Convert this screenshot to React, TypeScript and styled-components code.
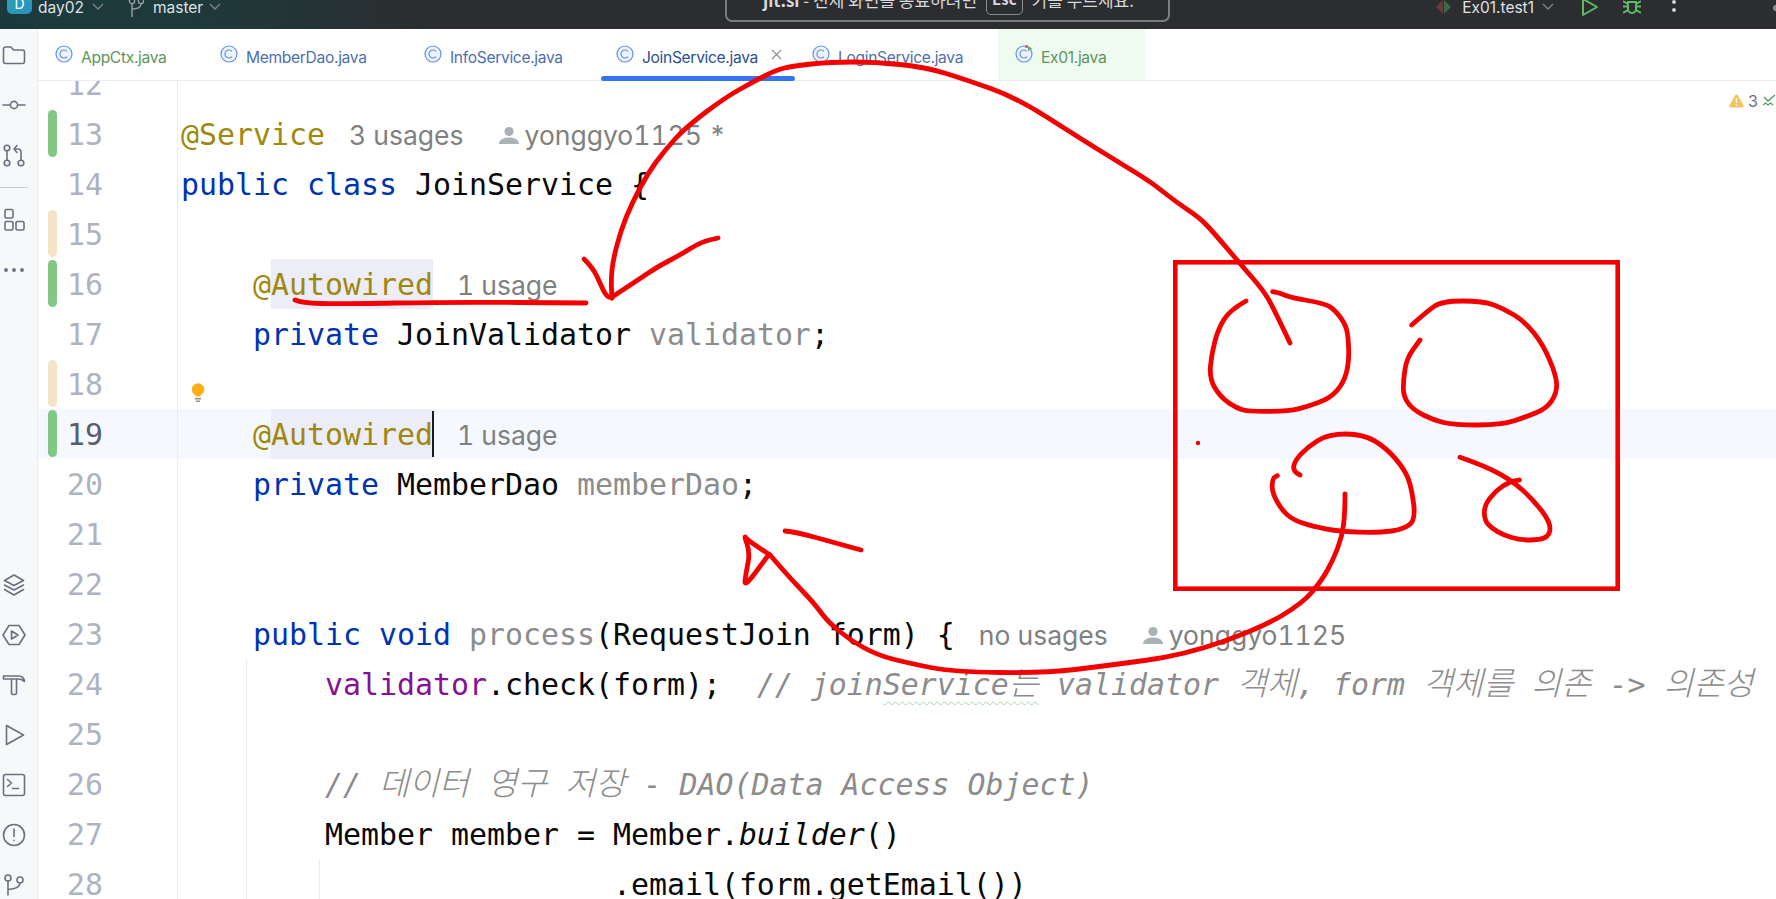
import React from "react";
import styled, { createGlobalStyle } from "styled-components";

const GlobalStyle = createGlobalStyle`
  html, body {
    margin: 0;
    padding: 0;
    background: #fff;
    overflow: hidden;
  }
`;

const tokenColors = {
  ann: "#9e880d",
  kw: "#0033b3",
  plain: "#080808",
  dim: "#8c8c8c",
  field: "#871094",
};

const Page = styled.div`
  position: relative;
  width: 1776px;
  height: 899px;
  overflow: hidden;
  font-family: Inter, "Noto Sans", sans-serif;
`;

/* top bar */
const TopBar = styled.header`
  position: relative;
  height: 29px;
  padding-bottom: 15px;
  box-sizing: border-box;
  display: flex;
  align-items: center;
  overflow: visible;
  color: #dfe1e5;
  background: linear-gradient(90deg, #1c3a3d 0, #1e3a3b 180px, #2b2d30 430px);
`;

const Logo = styled.div`
  flex: none;
  width: 25px;
  height: 25px;
  margin: -11px 6px 0 7px;
  border-radius: 5px;
  background: linear-gradient(135deg, #2aa7b0, #2b8fc0);
  color: #fff;
  font-size: 14px;
  line-height: 30px;
  text-align: center;
`;

const BarLabel = styled.span<{ $gap?: number }>`
  font-size: 15.5px;
  margin-left: ${({ $gap }) => $gap ?? 0}px;
`;

const BarIcon = styled.svg<{ $gap: number }>`
  flex: none;
  margin-left: ${({ $gap }) => $gap}px;
`;

const BarRight = styled.div`
  margin-left: auto;
  display: flex;
  align-items: center;
  padding-right: 0;
`;

const Notice = styled.div`
  position: absolute;
  left: 725px;
  top: -24px;
  width: 445px;
  height: 46px;
  box-sizing: border-box;
  padding-left: 36px;
  border: 2px solid #7b7d80;
  border-radius: 7px;
  background: #2b2d30;
  display: flex;
  align-items: center;
  color: #d7d9dc;
  font-family: "Noto Sans CJK KR", sans-serif;
  font-size: 17px;
  white-space: pre;
`;

const NoticeKey = styled.span`
  height: 32px;
  box-sizing: border-box;
  margin: 0 9px;
  padding: 0 5px;
  border: 1px solid #8b8d90;
  border-radius: 5px;
  font-weight: 700;
  font-size: 15px;
  line-height: 30px;
`;

/* body */
const Body = styled.div`
  display: flex;
  height: 870px;
`;

const Sidebar = styled.nav`
  flex: none;
  width: 38px;
  box-sizing: border-box;
  overflow: hidden;
  background: #f7f8fa;
  border-right: 1px solid #ebecf0;
  padding-top: 1px;
`;

const RailCell = styled.div`
  width: 27px;
  height: 50px;
  display: flex;
  align-items: center;
  justify-content: center;
`;

const RailRule = styled.div`
  width: 28px;
  height: 1px;
  background: #c9ccd6;
  margin: 7px 0 7px;
`;

const RailBottom = styled.div`
  margin-top: 265px;
`;

const RailSvg = styled.svg`
  width: 24px;
  height: 24px;
  fill: none;
  stroke: #6c707e;
  stroke-width: 1.6;
  stroke-linejoin: round;
  stroke-linecap: round;
`;

const Main = styled.main`
  flex: 1;
  min-width: 0;
  display: flex;
  flex-direction: column;
`;

const Tabs = styled.div`
  flex: none;
  height: 52px;
  box-sizing: border-box;
  display: flex;
  border-bottom: 1px solid #ebecf0;
`;

const Tab = styled.div<{ $bg?: string; $w: number; $active?: boolean }>`
  position: relative;
  flex: none;
  width: ${({ $w }) => $w}px;
  box-sizing: border-box;
  padding: 2px 0 0 17px;
  display: flex;
  align-items: center;
  gap: 8px;
  background: ${({ $bg }) => $bg ?? "transparent"};
`;

const TabName = styled.span<{ $color: string }>`
  font-size: 15.6px;
  letter-spacing: -0.33px;
  color: ${({ $color }) => $color};
  padding-top: 3px;
`;

const ActiveBar = styled.div`
  position: absolute;
  left: 2px;
  right: 0;
  bottom: -1px;
  height: 5px;
  border-radius: 3px;
  background: #3574f0;
`;

const TabClose = styled.svg`
  position: absolute;
  left: 172px;
  top: 20px;
`;

const Editor = styled.div`
  position: relative;
  flex: 1;
  overflow: hidden;
  font-family: "DejaVu Sans Mono", "Liberation Mono", monospace;
  font-size: 29.9px;
`;

const Lines = styled.div`
  margin-top: -22px;
`;

const Row = styled.div<{ $current?: boolean }>`
  display: flex;
  height: 50px;
  background: ${({ $current }) => ($current ? "#f5f8fe" : "transparent")};
`;

const Gutter = styled.div`
  flex: none;
  width: 140px;
  box-sizing: border-box;
  border-right: 1px solid #ebecf0;
  display: flex;
  padding-left: 10px;
`;

const Marker = styled.div<{ $color?: string }>`
  flex: none;
  width: 9px;
  height: 47px;
  margin: 1px 10px 0 0;
  border-radius: 5px;
  background: ${({ $color }) => $color ?? "transparent"};
`;

const LineNo = styled.span<{ $current?: boolean }>`
  line-height: 52px;
  color: ${({ $current }) => ($current ? "#5a5d6b" : "#aeb3c2")};
`;

const Code = styled.div`
  position: relative;
  flex: 1;
  min-width: 0;
  padding-left: 3px;
  line-height: 52px;
  white-space: pre;
  overflow: hidden;
  color: ${tokenColors.plain};
`;

const Tok = styled.span<{ $k: keyof typeof tokenColors; $italic?: boolean }>`
  color: ${({ $k }) => tokenColors[$k]};
  font-style: ${({ $italic }) => ($italic ? "italic" : "normal")};
`;

const Hangul = styled.span`
  font-family: "Noto Sans CJK KR", sans-serif;
  font-size: 32.7px;
  font-weight: 300;
  line-height: 1;
`;

const Selected = styled.span`
  display: inline-block;
  height: 50px;
  background: #edecf9;
`;

const Caret = styled.span`
  display: inline-block;
  width: 2px;
  height: 46px;
  margin: 2px -1px 0;
  vertical-align: top;
  background: #1a1a1a;
`;

const Typo = styled.span`
  text-decoration: underline wavy #a9d6ab 1px;
  text-underline-offset: 6px;
`;

const Inlay = styled.span<{ $gap?: number }>`
  font-family: Inter, "Noto Sans", sans-serif;
  font-size: 26.5px;
  font-feature-settings: "tnum";
  line-height: 1;
  color: #808080;
  margin-left: ${({ $gap }) => $gap ?? 24}px;
`;

const PersonIcon = styled.svg`
  display: inline-block;
  vertical-align: -1px;
  margin-left: 34px;
  margin-right: 5px;
`;

const Guide = styled.div<{ $x: number }>`
  position: absolute;
  top: 0;
  bottom: 0;
  left: ${({ $x }) => $x}px;
  width: 1px;
  background: #ebecf0;
`;

const Bulb = styled.svg`
  position: absolute;
  left: 13px;
  top: 24px;
`;

const Inspections = styled.div`
  position: absolute;
  top: 10px;
  right: -3px;
  display: flex;
  align-items: center;
  gap: 4px;
  font-family: Inter, sans-serif;
  font-size: 16px;
  color: #6c707e;
`;

const Ink = styled.svg`
  position: absolute;
  left: 0;
  top: 0;
  pointer-events: none;
  fill: none;
  stroke: #f50000;
  stroke-width: 4.8;
  stroke-linecap: round;
  stroke-linejoin: round;
`;

const InkBox = styled.rect`
  stroke-width: 4.6;
  stroke-linejoin: miter;
`;

const InkDot = styled.circle`
  fill: #f50000;
  stroke: none;
`;

type Pt = [number, number];

// pen strokes: runs of points, rounded through the midpoints
const smooth = (pts: Pt[]) => {
  let d = `M${pts[0][0]} ${pts[0][1]}`;
  for (let i = 1; i < pts.length - 1; i++) {
    const mx = (pts[i][0] + pts[i + 1][0]) / 2;
    const my = (pts[i][1] + pts[i + 1][1]) / 2;
    d += ` Q${pts[i][0]} ${pts[i][1]} ${mx} ${my}`;
  }
  const last = pts[pts.length - 1];
  return d + ` L${last[0]} ${last[1]}`;
};

// the four blobs were traced in a crop of 3x starting at 1150,250
const crop = (pts: Pt[]): Pt[] =>
  pts.map(([x, y]) => [1150 + x / 3, 250 + y / 3]);

const strokes: Pt[][] = [
  // arc from the first blob to the @Autowired arrow
  [
    [1290, 343], [1273, 307], [1263, 290], [1243, 267], [1214, 233], [1200, 218], [1176, 202],
    [1151, 182], [1128, 168], [1078, 137], [1017, 98], [967, 80], [925, 67], [875, 62], [830, 62],
    [793, 66], [776, 70], [753, 82], [726, 97], [686, 127], [665, 150], [648, 173], [632, 203],
    [621, 230], [613, 260], [611, 280], [612, 298],
  ],
  [[612, 297], [638, 280], [657, 267], [680, 255], [701, 242], [718, 238]],
  [[584, 259], [593, 268], [600, 283], [606, 296], [612, 298]],
  // underline below @Autowired
  [[295, 300], [302, 303], [340, 304], [450, 302], [586, 303]],
  // arc from the third blob to memberDao
  [
    [1345, 494], [1345, 513], [1342, 537], [1333, 560], [1322, 580], [1303, 603], [1261, 628],
    [1185, 655], [1104, 666], [1046, 673], [953, 672], [908, 663], [877, 655], [850, 640],
    [828, 622], [814, 603], [790, 578], [770, 555],
  ],
  [[770, 555], [747, 540], [744, 535], [750, 553], [746, 573], [744, 588], [767, 557]],
  [[785, 531], [796, 532], [832, 542], [861, 550]],
  // blobs
  crop([
    [288, 153], [240, 180], [205, 235], [185, 310], [178, 385], [210, 440], [260, 475], [300, 485],
    [420, 483], [470, 470], [540, 445], [580, 400], [597, 340], [595, 260], [585, 220], [550, 175],
    [520, 160], [425, 143], [385, 128], [368, 125],
  ]),
  crop([
    [785, 225], [830, 185], [875, 153], [1000, 153], [1060, 175], [1125, 215], [1180, 285],
    [1220, 380], [1220, 430], [1190, 475], [1130, 500], [1055, 525], [910, 525], [850, 510],
    [790, 480], [760, 440], [760, 390], [770, 325], [810, 270],
  ]),
  crop([
    [450, 675], [428, 665], [435, 630], [475, 590], [535, 552], [640, 552], [710, 595], [765, 660],
    [785, 715], [797, 810], [760, 838], [690, 848], [570, 845], [490, 830], [430, 810], [395, 780],
    [365, 725], [368, 685], [382, 677],
  ]),
  crop([
    [930, 622], [1010, 650], [1090, 695], [1150, 750], [1200, 815], [1200, 855], [1170, 870],
    [1110, 870], [1060, 855], [1025, 835], [1003, 810], [1003, 765], [1040, 720], [1080, 695],
    [1108, 690],
  ]),
];

const Chevron = ({ gap }: { gap: number }) => (
  <BarIcon $gap={gap} width="14" height="14" viewBox="0 0 14 14" fill="none" stroke="#7d8288" strokeWidth="1.4">
    <path d="M2 4l5 5 5-5" />
  </BarIcon>
);

const ClassIcon = ({ run }: { run?: boolean }) => (
  <svg width="18" height="18" viewBox="0 0 18 18" fill="none" style={{ flex: "none", marginTop: -4 }}>
    <circle cx="9" cy="9" r="8" fill="#eef3fe" stroke="#5f8fe8" strokeWidth="1.2" />
    <path d="M12 6.4a4 4 0 1 0 0 5.2" stroke="#5f8fe8" strokeWidth="1.2" />
    {run && <path d="M10 0h3v3h-3z" fill="#e0707a" />}
    {run && <path d="M13 1l4 2.5-4 2.5z" fill="#5fa868" />}
  </svg>
);

const PersonGlyph = () => (
  <PersonIcon width="22" height="20" viewBox="0 0 22 20" fill="#a9b2b5">
    <circle cx="11" cy="5.5" r="4.6" />
    <path d="M1 18c0-4 4-6.5 10-6.5S21 14 21 18z" />
  </PersonIcon>
);

const rows: { n: number; marker?: string; code?: React.ReactNode }[] = [
  { n: 12 },
  {
    n: 13,
    marker: "#82c785",
    code: (
      <>
        <Tok $k="ann">@Service</Tok>
        <Inlay>3 usages</Inlay>
        <PersonGlyph />
        <Inlay $gap={0}>yonggyo1125 *</Inlay>
      </>
    ),
  },
  {
    n: 14,
    code: (
      <>
        <Tok $k="kw">public class</Tok> JoinService {"{"}
      </>
    ),
  },
  { n: 15, marker: "#f5e3c8" },
  {
    n: 16,
    marker: "#82c785",
    code: (
      <>
        {"    "}
        <Tok $k="ann">
          @<Selected>Autowired</Selected>
        </Tok>
        <Inlay>1 usage</Inlay>
      </>
    ),
  },
  {
    n: 17,
    code: (
      <>
        {"    "}
        <Tok $k="kw">private</Tok> JoinValidator <Tok $k="dim">validator</Tok>;
      </>
    ),
  },
  { n: 18, marker: "#f5e3c8" },
  {
    n: 19,
    marker: "#82c785",
    code: (
      <>
        {"    "}
        <Tok $k="ann">
          @<Selected>Autowired</Selected>
        </Tok>
        <Caret />
        <Inlay>1 usage</Inlay>
      </>
    ),
  },
  {
    n: 20,
    code: (
      <>
        {"    "}
        <Tok $k="kw">private</Tok> MemberDao <Tok $k="dim">memberDao</Tok>;
      </>
    ),
  },
  { n: 21 },
  { n: 22 },
  {
    n: 23,
    code: (
      <>
        {"    "}
        <Tok $k="kw">public void</Tok> <Tok $k="dim">process</Tok>(RequestJoin form) {"{"}
        <Inlay>no usages</Inlay>
        <PersonGlyph />
        <Inlay $gap={0}>yonggyo1125</Inlay>
      </>
    ),
  },
  {
    n: 24,
    code: (
      <>
        {"        "}
        <Tok $k="field">validator</Tok>.check(form);{"  "}
        <Tok $k="dim" $italic>
          // join<Typo>Service<Hangul>는</Hangul></Typo> validator <Hangul>객체</Hangul>, form{" "}
          <Hangul>객체를</Hangul> <Hangul>의존</Hangul> -&gt; <Hangul>의존성</Hangul>
        </Tok>
      </>
    ),
  },
  { n: 25 },
  {
    n: 26,
    code: (
      <>
        {"        "}
        <Tok $k="dim" $italic>
          // <Hangul>데이터</Hangul> <Hangul>영구</Hangul> <Hangul>저장</Hangul> - DAO(Data Access Object)
        </Tok>
      </>
    ),
  },
  {
    n: 27,
    code: (
      <>
        {"        "}Member member = Member.<Tok $k="plain" $italic>builder</Tok>()
      </>
    ),
  },
  { n: 28, code: <>{"                        "}.email(form.getEmail())</> },
];

const App = () => (
  <Page>
    <GlobalStyle />
    <TopBar>
      <Logo>D</Logo>
      <BarLabel>day02</BarLabel>
      <Chevron gap={7} />
      <BarIcon $gap={23} width="16" height="22" viewBox="0 0 16 22" fill="none" stroke="#9a9ea3" strokeWidth="1.4">
        <circle cx="4" cy="5" r="2.6" />
        <circle cx="13" cy="5" r="2.6" />
        <path d="M4 8v13M13 8c0 4-4 5-9 5" />
      </BarIcon>
      <BarLabel $gap={9}>master</BarLabel>
      <Chevron gap={5} />
      <BarRight>
        <BarIcon $gap={0} width="17" height="16" viewBox="0 0 17 16">
          <path d="M8 1L1 8l7 7z" fill="#6d3a3c" />
          <path d="M9 1l7 7-7 7z" fill="#3d6a46" />
        </BarIcon>
        <BarLabel $gap={10}>Ex01.test1</BarLabel>
        <Chevron gap={7} />
        <BarIcon $gap={26} width="18" height="20" viewBox="0 0 18 20" fill="none" stroke="#5fb865" strokeWidth="2" strokeLinejoin="round">
          <path d="M2 2l14 8-14 8z" />
        </BarIcon>
        <BarIcon $gap={24} width="18" height="20" viewBox="0 0 18 20" fill="none" stroke="#5fb865" strokeWidth="2">
          <path d="M5 5h8v7a4 4 0 0 1-8 0zM0 4l5 3M18 4l-5 3M0 9.500h5M18 9.500h-5M0 16l5-3M18 16l-5-3" />
        </BarIcon>
        <BarIcon $gap={31} width="4" height="16" viewBox="0 0 4 16" fill="#d5d7da" stroke="none">
          <circle cx="2" cy="3" r="1.900" />
          <circle cx="2" cy="11" r="1.900" />
        </BarIcon>
        <BarIcon $gap={96} width="4" height="14" viewBox="0 0 4 14" fill="#8b8d90" stroke="none">
          <circle cx="4" cy="8" r="3" />
        </BarIcon>
      </BarRight>
      <Notice>
        <b>jit.si</b> - 전체 화면을 종료하려면<NoticeKey>Esc</NoticeKey>키를 누르세요.
      </Notice>
    </TopBar>
    <Body>
      <Sidebar>
        <RailCell>
          <RailSvg viewBox="0 0 24 24">
            <path d="M1.500 6a2 2 0 0 1 2-2h5.500l2.500 3h9a2 2 0 0 1 2 2v9.500a2 2 0 0 1-2 2h-17a2 2 0 0 1-2-2z" />
          </RailSvg>
        </RailCell>
        <RailCell>
          <RailSvg viewBox="0 0 24 24">
            <circle cx="12" cy="12" r="3.600" />
            <path d="M1 12h7.400M15.600 12H23" />
          </RailSvg>
        </RailCell>
        <RailCell>
          <RailSvg viewBox="0 0 24 24">
            <circle cx="5" cy="5" r="2.800" />
            <circle cx="5" cy="20" r="2.800" />
            <circle cx="19" cy="20" r="2.800" />
            <path d="M5 8v9M19 17V9a3 3 0 0 0-3-3h-3M15 2.500L12 6l3 3.500" />
          </RailSvg>
        </RailCell>
        <RailRule />
        <RailCell>
          <RailSvg viewBox="0 0 24 24">
            <rect x="3" y="1.500" width="8" height="8.500" rx="1.500" />
            <rect x="3" y="13.500" width="8" height="8.500" rx="1.500" />
            <rect x="14" y="13.500" width="8" height="8.500" rx="1.500" />
          </RailSvg>
        </RailCell>
        <RailCell>
          <RailSvg viewBox="0 0 24 24" style={{ fill: "#6c707e", stroke: "none" }}>
            <circle cx="4" cy="12" r="1.900" />
            <circle cx="12" cy="12" r="1.900" />
            <circle cx="20" cy="12" r="1.900" />
          </RailSvg>
        </RailCell>
        <RailBottom>
          <RailCell>
            <RailSvg viewBox="0 0 24 24">
              <path d="M12 2l9.500 5.500L12 12.500 2.500 7.500zM2.500 12L12 17l9.500-5M2.500 16.500L12 22l9.500-5.500" />
            </RailSvg>
          </RailCell>
          <RailCell>
            <RailSvg viewBox="0 0 24 24">
              <path d="M7 2.500h10L23 12l-6 9.500H7L1 12z" />
              <path d="M9.500 8l6.500 4-6.500 4z" />
            </RailSvg>
          </RailCell>
          <RailCell>
            <RailSvg viewBox="0 0 24 24">
              <path d="M1.500 3h15.500c3 0 5.500 2.500 5.500 5.500l-3 -2-3-.5h-15zM9.500 6v14a1.500 1.500 0 0 0 1.500 1.500h2a1.500 1.500 0 0 0 1.500-1.500V6" />
            </RailSvg>
          </RailCell>
          <RailCell>
            <RailSvg viewBox="0 0 24 24">
              <path d="M4.500 2.500L21.500 12 4.500 21.500z" />
            </RailSvg>
          </RailCell>
          <RailCell>
            <RailSvg viewBox="0 0 24 24">
              <rect x="1.500" y="1.500" width="21" height="21" rx="2" />
              <path d="M5.500 6.500l4 3.500-4 3.500M10.500 15.500h6" />
            </RailSvg>
          </RailCell>
          <RailCell>
            <RailSvg viewBox="0 0 24 24">
              <circle cx="12" cy="12" r="10.500" />
              <path d="M12 6v7.500M12 17.200v.3" />
            </RailSvg>
          </RailCell>
          <RailCell>
            <RailSvg viewBox="0 0 24 24">
              <circle cx="6" cy="5" r="3" />
              <circle cx="18" cy="7" r="3" />
              <path d="M6 8v14M18 10c0 4-4 6-12 6.500" />
            </RailSvg>
          </RailCell>
        </RailBottom>
      </Sidebar>
      <Main>
        <Tabs>
          <Tab $w={165}>
            <ClassIcon />
            <TabName $color="#5c9462">AppCtx.java</TabName>
          </Tab>
          <Tab $w={204}>
            <ClassIcon />
            <TabName $color="#4d6fae">MemberDao.java</TabName>
          </Tab>
          <Tab $w={192}>
            <ClassIcon />
            <TabName $color="#4d6fae">InfoService.java</TabName>
          </Tab>
          <Tab $w={196} $active>
            <ClassIcon />
            <TabName $color="#2d4f8f">JoinService.java</TabName>
            <TabClose width="11" height="11" viewBox="0 0 11 11" fill="none" stroke="#8a8d94" strokeWidth="1.100">
              <path d="M1 1l9 9M10 1l-9 9" />
            </TabClose>
            <ActiveBar />
          </Tab>
          <Tab $w={203}>
            <ClassIcon />
            <TabName $color="#4d6fae">LoginService.java</TabName>
          </Tab>
          <Tab $w={147} $bg="#eefbee">
            <ClassIcon run />
            <TabName $color="#5c9462">Ex01.java</TabName>
          </Tab>
        </Tabs>
        <Editor>
          <Lines>
            {rows.map(({ n, marker, code }) => (
              <Row key={n} $current={n === 19}>
                <Gutter>
                  <Marker $color={marker} />
                  <LineNo $current={n === 19}>{n}</LineNo>
                </Gutter>
                <Code>
                  {n >= 24 && <Guide $x={68} />}
                  {n === 28 && <Guide $x={141} />}
                  {n === 18 && (
                    <Bulb width="14" height="20" viewBox="0 0 14 20">
                      <circle cx="7" cy="6.500" r="6.200" fill="#ffaf0f" />
                      <path d="M4.500 12h5v1.500h-5z" fill="#ffaf0f" />
                      <path d="M4 15h6v1.400H4zM5 17.500h4v1.400H5z" fill="#8c8f99" />
                    </Bulb>
                  )}
                  {code}
                </Code>
              </Row>
            ))}
          </Lines>
          <Inspections>
            <svg width="15" height="14" viewBox="0 0 15 14">
              <path d="M7.500.5a1.500 1.500 0 0 1 1.300.8l5.700 10a1.500 1.500 0 0 1-1.300 2.200H1.800A1.500 1.500 0 0 1 .5 11.300l5.700-10A1.500 1.500 0 0 1 7.500.5z" fill="#f2c55c" />
              <path d="M7.500 4v5M7.500 10.500v1.200" stroke="#fff" strokeWidth="1.500" />
            </svg>
            3
            <svg width="16" height="14" viewBox="0 0 16 14" fill="none" stroke="#4f9a5c" strokeWidth="1.300" style={{ marginLeft: 1 }}>
              <path d="M1 3l4 4 7-6M0 11l2.500-2 2.500 2 2.500-2 2.500 2" />
            </svg>
          </Inspections>
        </Editor>
      </Main>
    </Body>
    <Ink width="1776" height="899" viewBox="0 0 1776 899">
      <InkBox x="1175.300" y="262.300" width="442.400" height="326.400" />
      {strokes.map((pts, i) => (
        <path key={i} d={smooth(pts)} />
      ))}
      <InkDot cx="1198" cy="443" r="2.200" />
    </Ink>
  </Page>
);

export default App;
